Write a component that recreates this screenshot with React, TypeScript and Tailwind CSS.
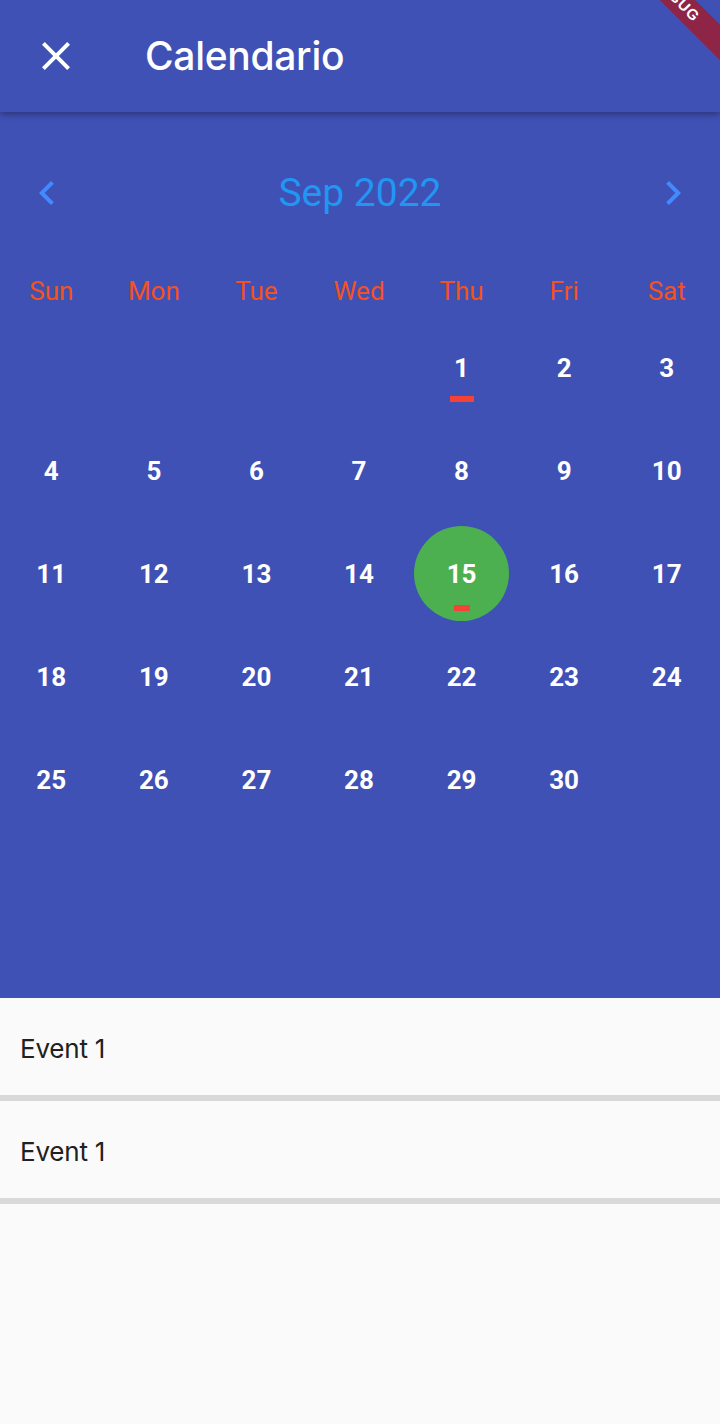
import React from 'react';

const weekDays = ['Sun', 'Mon', 'Tue', 'Wed', 'Thu', 'Fri', 'Sat'];

// Sep 2022 starts on a Thursday
const cells: (number | null)[] = [
  null, null, null, null, 1, 2, 3,
  4, 5, 6, 7, 8, 9, 10,
  11, 12, 13, 14, 15, 16, 17,
  18, 19, 20, 21, 22, 23, 24,
  25, 26, 27, 28, 29, 30, null,
];

const events = ['Event 1', 'Event 1'];

const DayCell: React.FC<{ day: number | null }> = ({ day }) => {
  if (day === null) return <div className="h-[103px]" />;
  const selected = day === 15;
  const hasEvent = day === 1 || day === 15;

  return (
    <div className="h-[103px] flex items-center justify-center relative">
      {selected && <div className="absolute w-[95px] h-[95px] rounded-full bg-[#4caf50]" />}
      <span className="relative text-white font-bold text-[26px] leading-none">{day}</span>
      {hasEvent && (
        <div
          className={
            selected
              ? 'absolute top-[83px] w-[16px] h-[6px] bg-[#f44336]'
              : 'absolute top-[80px] w-[24px] h-[6px] bg-[#f44336]'
          }
        />
      )}
    </div>
  );
};

const App: React.FC = () => {
  return (
    <div className="w-[720px] h-[1424px] relative overflow-hidden bg-[#fafafa] font-['Roboto',sans-serif]">
      {/* App bar */}
      <div className="relative z-10 h-[112px] bg-[#3f51b5] shadow-[0_3px_6px_rgba(0,0,0,0.3)] flex items-center">
        <svg className="ml-[32px] w-[48px] h-[48px]" viewBox="0 0 24 24" fill="white">
          <path d="M19 6.41L17.59 5 12 10.59 6.41 5 5 6.41 10.59 12 5 17.59 6.41 19 12 13.41 17.59 19 19 17.59 13.41 12z" />
        </svg>
        <h1 className="ml-[65px] text-white text-[39px] font-medium font-['Inter',sans-serif] tracking-[-0.3px]">Calendario</h1>
      </div>

      {/* Calendar */}
      <div className="h-[886px] bg-[#3f51b5] pt-[46px] pr-[2px]">
        <div className="h-[70px] flex items-center justify-between pl-[23px] pr-[21px]">
          <svg className="w-[48px] h-[48px]" viewBox="0 0 24 24" fill="#448aff">
            <path d="M15.41 7.41L14 6l-6 6 6 6 1.41-1.41L10.83 12z" />
          </svg>
          <span className="text-[#2196f3] text-[39px] leading-none">Sep 2022</span>
          <svg className="w-[48px] h-[48px]" viewBox="0 0 24 24" fill="#448aff">
            <path d="M10 6L8.59 7.41 13.17 12l-4.58 4.59L10 18l6-6z" />
          </svg>
        </div>

        <div className="mt-[38px] grid grid-cols-7 h-[50px] items-center">
          {weekDays.map((d) => (
            <div key={d} className="text-center text-[#f4511e] text-[26px] leading-none">{d}</div>
          ))}
        </div>

        <div className="grid grid-cols-7">
          {cells.map((day, i) => (
            <DayCell key={i} day={day} />
          ))}
        </div>
      </div>

      {/* Event list */}
      <div className="font-['Inter',sans-serif]">
        {events.map((e, i) => (
          <div key={i}>
            <div className="h-[97px] flex items-center px-[20px] bg-[#fafafa] pt-[3px]">
              <span className="text-[#212121] text-[26px] tracking-[-0.2px]">{e}</span>
            </div>
            <div className="h-[6px] bg-[#d9d9d9]" />
          </div>
        ))}
      </div>

      {/* Debug banner */}
      <div className="absolute z-20 left-[576px] top-[-14px] w-[200px] h-[25px] rotate-45 bg-[#8e2547] flex items-center justify-center">
        <span className="text-white text-[15px] font-bold tracking-[1px] font-['Liberation_Sans',sans-serif]">DEBUG</span>
      </div>
    </div>
  );
};

export default App;
